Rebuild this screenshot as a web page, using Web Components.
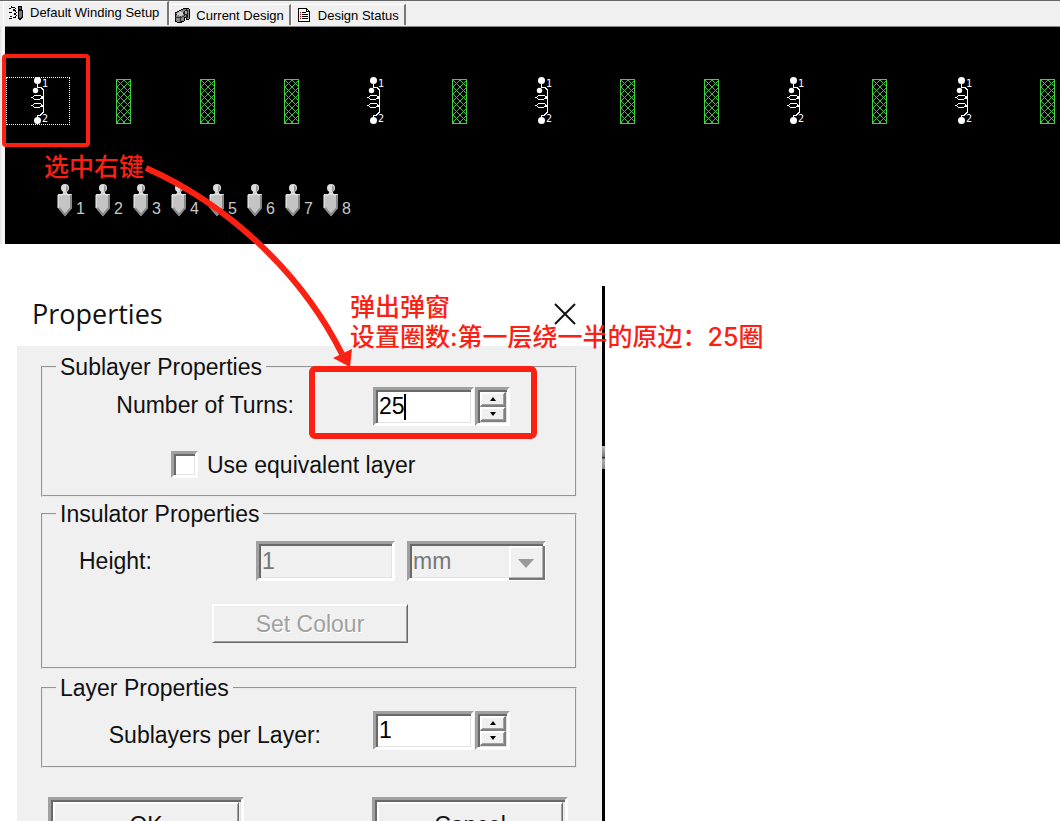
<!DOCTYPE html>
<html lang="en">
<head>
<meta charset="utf-8">
<title>Winding Setup</title>
<style>
    html, body {
        margin: 0;
        background: #fff;
        font-family: "Liberation Sans", Arial, "Noto Sans CJK SC", sans-serif;
        color: #111;
    }

    body {
        height: 100vh;
        overflow: hidden;
    }
</style>
</head>
<body>
<winding-app></winding-app>

<script>
// shared look of the sunken and raised controls
const bevels = `
    * { box-sizing: border-box; }

    .sunken {
        border: 3px solid;
        border-color: #a0a0a0 #fff #fff #a0a0a0;
        box-shadow: inset 2px 2px #696969, inset -1px -1px #e3e3e3;
        border-radius: 0;
        outline: none;
    }

    .raised {
        border: 1px solid;
        border-color: #fff #696969 #696969 #fff;
        box-shadow: inset 1px 1px #fff, inset -1px -1px #a0a0a0;
        border-radius: 0;
        background: #f0f0f0;
    }
`;

const tabIcons = {
    winding: `
        <path d="M1 3h2M3 1v2M1 7h3M2 11h2M1 13h3" stroke="#000" fill="none"/>
        <path d="M4 2c4 0 4 3 1 3 4 0 4 4 1 4 3 0 3 4-1 4" stroke="#000" fill="none"/>
        <circle cx="12" cy="3" r="2" fill="#555" stroke="#000"/>
        <path d="M10 5.5h4v7l-2 2-2-2z" fill="#777" stroke="#000"/>
    `,
    design: `
        <path d="M1 6l4-2 6-3 4 1v10l-3 1v-3l-2 1v3l-5 2-4-2z" fill="#888" stroke="#000"/>
        <path d="M1 7l5 1 4-2M6 8v7M1 10l5 1 4-2" stroke="#333" fill="none"/>
        <path d="M5 4l4 1v3l-3 1-4-2z" fill="#ccc"/>
        <path d="M9 5l3-3 2 1v8l-2 1V8l-2 1z" fill="#222"/>
        <path d="M11 4h2v3h-2z" fill="#aaa"/>
    `,
    status: `
        <path d="M2.5 1.5h8l3 3v10h-11z" fill="#fff" stroke="#000"/>
        <path d="M10.5 1.5v3h3" fill="none" stroke="#000"/>
        <path d="M6 5.5h4M6 7.5h6M6 9.5h6M6 11.5h6" stroke="#000"/>
        <path d="M4 5.5h1M4 7.5h1M4 9.5h1M4 11.5h1" stroke="#a00"/>
    `
};

class SetupTab extends HTMLElement {
    connectedCallback() {
        this.attachShadow({ mode: 'open' });
        this.shadowRoot.innerHTML = `
        <style>
            :host {
                display: block;
                height: 21px;
                margin-bottom: 1px;
            }

            :host([selected]) {
                height: 24px;
            }

            button {
                display: flex;
                align-items: center;
                gap: 6px;
                height: 100%;
                padding: 0 5px 0 4px;
                border: 0;
                border-top: 1px solid #fff;
                border-left: 1px solid #fff;
                border-right: 2px solid #777;
                background: #f0f0f0;
                font: 13px "Liberation Sans", Arial, sans-serif;
                color: #000;
                white-space: nowrap;
            }

            :host([selected]) button {
                padding: 0 8px 2px 4px;
            }

            svg {
                display: block;
                flex: none;
            }
        </style>
        <button type="button" role="tab">
            <svg width="16" height="16" viewBox="0 0 16 16" shape-rendering="crispEdges">${tabIcons[this.getAttribute('icon')]}</svg>
            <slot></slot>
        </button>
        `;
    }
}

// one slot of the winding row: a coil or an insulator
class WindingCell extends HTMLElement {
    connectedCallback() {
        const coil = `
            <svg width="64" height="48" viewBox="0 0 64 48">
                <g fill="#fff">
                    <circle cx="31.5" cy="3.5" r="3.5"/>
                    <circle cx="29.5" cy="13.5" r="2.7"/>
                    <circle cx="31.5" cy="43.5" r="3.5"/>
                </g>
                <g fill="none" stroke="#fff" shape-rendering="crispEdges">
                    <path d="M31.5 7v3h3l3 3v6l-2 2M37.5 19v9l-2 1M37.5 27v8l-3 3h-3v3"/>
                    <path d="M37 21.5h-2l-2 1h-4l-3-2 3-2h5l3 2"/>
                    <path d="M37 29.5h-2l-2 1h-4l-3-2 3-2h5l3 2"/>
                </g>
                <g fill="#fff" font-family="DejaVu Sans Mono, monospace" font-size="10">
                    <text x="36" y="10">1</text>
                    <text x="36" y="45">2</text>
                </g>
            </svg>`;
        const insulator = `
            <svg width="64" height="48" viewBox="0 0 64 48" shape-rendering="crispEdges">
                <defs>
                    <pattern id="mesh" x="27" y="3" width="7" height="7" patternUnits="userSpaceOnUse">
                        <path d="M0 0l7 7M7 0l-7 7" stroke="#3cc43c" fill="none"/>
                    </pattern>
                </defs>
                <rect x="26.5" y="2.5" width="14" height="44" fill="url(#mesh)" stroke="#3cd43c"/>
            </svg>`;

        this.attachShadow({ mode: 'open' });
        this.shadowRoot.innerHTML = `
        <style>
            :host {
                display: block;
                flex: none;
                width: 64px;
                height: 48px;
            }

            :host([selected]) {
                outline: 1px dotted #fff;
                outline-offset: -1px;
            }

            svg { display: block; }
        </style>
        ${this.getAttribute('kind') === 'coil' ? coil : insulator}
        `;
    }
}

class WindingPin extends HTMLElement {
    connectedCallback() {
        this.attachShadow({ mode: 'open' });
        this.shadowRoot.innerHTML = `
        <style>
            :host {
                display: flex;
                flex: none;
                align-items: flex-end;
                gap: 3px;
                width: 38px;
                font-size: 16px;
                line-height: 17px;
                color: #c8c8c8;
            }
        </style>
        <svg width="16" height="34" viewBox="0 0 16 34">
            <path d="M6 6h4v6H6z" fill="#ccc"/>
            <circle cx="8" cy="5" r="4" fill="#ddd"/>
            <path d="M9 2a4 4 0 0 1 0 7z" fill="#999"/>
            <path d="M1 11h4l1-1h4l1 1h4v14l-7 8-7-8z" fill="#c4c4c4"/>
            <path d="M1 25V12h4l1-1h4l1 1h3" fill="none" stroke="#f4f4f4" stroke-width="1"/>
            <path d="M14 12v13l-6 7-6-7" fill="none" stroke="#888" stroke-width="2"/>
        </svg>
        <slot></slot>
        `;
    }
}

class WindingBoard extends HTMLElement {
    connectedCallback() {
        const kinds = 'CIIICICIICICI'.split('');

        this.attachShadow({ mode: 'open' });
        this.shadowRoot.innerHTML = `
        <style>
            :host {
                display: block;
                border-top: 1px solid #666;
                background: #f0f0f0;
            }

            .tabs {
                display: flex;
                align-items: flex-end;
                height: 25px;
                padding-left: 3px;
            }

            .panel {
                margin-left: 5px;
                padding: 50px 0 27px 1px;
                border-top: 1px solid #888;
                background: #000;
                overflow: hidden;
            }

            .strip {
                background: linear-gradient(90deg, #e4e4e4 1px, #fff 3px, #f0f0f0 4px);
            }

            .cells {
                display: flex;
                gap: 20px;
            }

            .pins {
                display: flex;
                padding: 58px 0 0 51px;
            }
        </style>
        <div class="tabs" role="tablist">
            <setup-tab icon="winding" selected>Default Winding Setup</setup-tab>
            <setup-tab icon="design">Current Design</setup-tab>
            <setup-tab icon="status">Design Status</setup-tab>
        </div>
        <div class="strip">
            <div class="panel">
                <div class="cells">
                    ${kinds.map((kind, i) => `<winding-cell kind="${kind === 'C' ? 'coil' : 'insulator'}" ${i === 0 ? 'selected' : ''}></winding-cell>`).join('')}
                </div>
                <div class="pins">
                    ${[1, 2, 3, 4, 5, 6, 7, 8].map((n) => `<winding-pin>${n}</winding-pin>`).join('')}
                </div>
            </div>
        </div>
        `;
    }
}

class PropertyGroup extends HTMLElement {
    connectedCallback() {
        this.attachShadow({ mode: 'open' });
        this.shadowRoot.innerHTML = `
        <style>
            :host { display: block; }

            fieldset {
                margin: 0;
                padding: 0;
                border: 2px groove #e8e8e8;
            }

            legend {
                margin-left: 13px;
                padding: 0 4px;
                line-height: 26px;
            }
        </style>
        <fieldset>
            <legend>${this.getAttribute('heading')}</legend>
            <slot></slot>
        </fieldset>
        `;
    }
}

// label, number box and its up/down buttons
class SpinField extends HTMLElement {
    connectedCallback() {
        this.attachShadow({ mode: 'open' });
        this.shadowRoot.innerHTML = `
        <style>
            ${bevels}

            :host {
                display: grid;
                grid-template-columns: 329px 101px 35px;
                column-gap: 1px;
                align-items: center;
            }

            label {
                justify-self: end;
                padding: var(--label-padding, 0);
            }

            .box {
                position: relative;
            }

            input {
                display: block;
                width: 100%;
                height: 39px;
                padding: 0 3px;
                background: #fff;
                font: inherit;
                color: #000;
            }

            .caret {
                position: absolute;
                left: 31px;
                top: 7px;
                width: 2px;
                height: 26px;
                background: #000;
            }

            .spin {
                display: grid;
                grid-template-rows: 1fr 1fr;
                height: 39px;
                padding: 2px 1px 1px 2px;
            }

            .spin button {
                display: grid;
                place-items: center;
                padding: 0;
                min-height: 0;
                border-width: 1px 2px 2px 1px;
                border-color: #fff #808080 #808080 #fff;
            }

            .spin svg { display: block; }
        </style>
        <label for="value">${this.getAttribute('label')}</label>
        <div class="box">
            <input id="value" class="sunken" type="text" inputmode="numeric" value="${this.getAttribute('value')}">
            ${this.hasAttribute('active') ? '<span class="caret"></span>' : ''}
        </div>
        <div class="spin sunken">
            <button type="button" class="raised" aria-label="Increase"><svg width="6" height="4"><path d="M3 0l3 4H0z"/></svg></button>
            <button type="button" class="raised" aria-label="Decrease"><svg width="6" height="4"><path d="M3 4l3-4H0z"/></svg></button>
        </div>
        `;

        const input = this.shadowRoot.querySelector('input');
        const [up, down] = this.shadowRoot.querySelectorAll('button');
        up.addEventListener('click', () => { input.value = Number(input.value) + 1; });
        down.addEventListener('click', () => { input.value = Math.max(0, Number(input.value) - 1); });
    }
}

class CheckField extends HTMLElement {
    connectedCallback() {
        this.attachShadow({ mode: 'open' });
        this.shadowRoot.innerHTML = `
        <style>
            ${bevels}

            :host { display: block; }

            label {
                display: flex;
                align-items: center;
                gap: 9px;
            }

            input {
                appearance: none;
                width: 27px;
                height: 27px;
                margin: 0;
                background: #fff;
                border-width: 2px;
            }
        </style>
        <label><input type="checkbox" class="sunken"><slot></slot></label>
        `;
    }
}

class HeightField extends HTMLElement {
    connectedCallback() {
        this.attachShadow({ mode: 'open' });
        this.shadowRoot.innerHTML = `
        <style>
            ${bevels}

            :host {
                display: grid;
                grid-template-columns: 177px 139px 139px;
                column-gap: 12px;
                align-items: center;
                padding-left: 24px;
            }

            label { padding-left: 12px; }

            input, select {
                display: block;
                width: 100%;
                height: 40px;
                padding: 0 3px;
                background: #f0f0f0;
                font: inherit;
                color: #777;
                opacity: 1;
                appearance: none;
            }

            .unit { position: relative; }

            .unit svg {
                position: absolute;
                right: 1px;
                top: 5px;
                pointer-events: none;
            }
        </style>
        <label for="height">Height:</label>
        <input id="height" class="sunken" type="text" value="1" disabled>
        <div class="unit">
            <select class="sunken" aria-label="Height unit" disabled><option>mm</option></select>
            <svg width="36" height="34">
                <path d="M0 0h36v34H0z" fill="#f0f0f0"/>
                <path d="M1 32V1h33" fill="none" stroke="#fff" stroke-width="2"/>
                <path d="M0 33h35V0" fill="none" stroke="#777" stroke-width="3"/>
                <path d="M9 13h16l-8 9z" fill="#999"/>
            </svg>
        </div>
        `;
    }
}

class DialogButton extends HTMLElement {
    connectedCallback() {
        this.attachShadow({ mode: 'open' });
        this.shadowRoot.innerHTML = `
        <style>
            ${bevels}

            :host { display: block; width: 196px; }

            button {
                width: 100%;
                height: 39px;
                padding: 0;
                font: inherit;
                color: #111;
                border-width: 2px;
            }

            button:disabled {
                color: #a0a0a0;
                text-shadow: 1px 1px #fff;
            }

            .frame { padding: 2px; }

            .frame button { height: 46px; }
        </style>
        <div class="${this.hasAttribute('large') ? 'frame sunken' : ''}">
            <button type="button" class="raised" ${this.hasAttribute('disabled') ? 'disabled' : ''}><slot></slot></button>
        </div>
        `;
    }
}

class PropertiesDialog extends HTMLElement {
    connectedCallback() {
        this.attachShadow({ mode: 'open' });
        this.shadowRoot.innerHTML = `
        <style>
            :host {
                display: block;
                position: relative;
                width: 588px;
                box-sizing: border-box;
                border-right: 3px solid #000;
                font-size: 23px;
                line-height: 26px;
            }

            header {
                display: flex;
                align-items: center;
                justify-content: space-between;
                height: 60px;
                box-sizing: border-box;
                padding: 0 25px 5px 15px;
            }

            h2 {
                margin: 0;
                font: 27px "Open Sans", "Noto Sans", sans-serif;
            }

            .close {
                width: 24px;
                height: 24px;
                padding: 0;
                border: 0;
                background: none;
            }

            .close svg { display: block; }

            .body {
                display: grid;
                gap: 4px;
                padding: 8px 25px 24px 24px;
                background: #f0f0f0;
            }

            spin-field { padding: 7px 0; }

            .turns { --label-padding: 0 78px 4px 0; }

            check-field { padding: 18px 0 17px 128px; }

            height-field { padding-top: 14px; padding-bottom: 23px; }

            .colour { margin: 0 0 24px 169px; }

            .last { margin-top: 2px; }

            .layer {
                --label-padding: 8px 51px 0 0;
                padding: 10px 0 16px;
            }

            .actions {
                display: flex;
                justify-content: space-between;
                padding: 25px 9px 0 7px;
            }

            /* scrap of the window behind the dialog edge */
            .scrap {
                position: absolute;
                right: -3px;
                top: 160px;
                width: 3px;
                height: 23px;
                background: linear-gradient(#bbb, #777 45%, #333 50%, #aaa 60%, #888);
            }
        </style>
        <header>
            <h2>Properties</h2>
            <button type="button" class="close" aria-label="Close">
                <svg width="24" height="24"><path d="M2 2l20 20M22 2L2 22" stroke="#111" stroke-width="2" fill="none"/></svg>
            </button>
        </header>
        <div class="body">
            <property-group heading="Sublayer Properties">
                <spin-field class="turns" label="Number of Turns:" value="25" active></spin-field>
                <check-field>Use equivalent layer</check-field>
            </property-group>
            <property-group heading="Insulator Properties">
                <height-field></height-field>
                <dialog-button class="colour" disabled>Set Colour</dialog-button>
            </property-group>
            <property-group class="last" heading="Layer Properties">
                <spin-field class="layer" label="Sublayers per Layer:" value="1"></spin-field>
            </property-group>
            <div class="actions">
                <dialog-button large>OK</dialog-button>
                <dialog-button large>Cancel</dialog-button>
            </div>
        </div>
        <span class="scrap"></span>
        `;
    }
}

// red marks and notes that lie over both windows
class MarkupLayer extends HTMLElement {
    connectedCallback() {
        this.attachShadow({ mode: 'open' });
        this.shadowRoot.innerHTML = `
        <style>
            :host {
                position: absolute;
                left: 0;
                top: 0;
                pointer-events: none;
                color: #fc2012;
                font: 500 25px/30px Inter, "Noto Sans CJK SC", sans-serif;
            }

            svg { display: block; }

            p {
                position: absolute;
                margin: 0;
                white-space: nowrap;
            }

            .select { left: 44px; top: 152px; }
            .popup { left: 350px; top: 292px; }
        </style>
        <svg width="560" height="460" fill="none" stroke="#fc2012">
            <rect x="4" y="56" width="84" height="89" rx="2" stroke-width="4"/>
            <rect x="312" y="369" width="222" height="67" rx="3" stroke-width="6"/>
            <path d="M146 168C225 203 300 270 342 354" stroke-width="6"/>
            <path d="M333 358l19-9-2 18z" fill="#fc2012" stroke="none"/>
        </svg>
        <p class="select">选中右键</p>
        <p class="popup">弹出弹窗<br>设置圈数:第一层绕一半的原边：25圈</p>
        `;
    }
}

class WindingApp extends HTMLElement {
    connectedCallback() {
        this.attachShadow({ mode: 'open' });
        this.shadowRoot.innerHTML = `
        <style>
            :host {
                display: block;
                position: relative;
            }

            properties-dialog { margin: 42px 0 0 17px; }
        </style>
        <winding-board></winding-board>
        <properties-dialog></properties-dialog>
        <markup-layer></markup-layer>
        `;
    }
}

customElements.define('setup-tab', SetupTab);
customElements.define('winding-cell', WindingCell);
customElements.define('winding-pin', WindingPin);
customElements.define('winding-board', WindingBoard);
customElements.define('property-group', PropertyGroup);
customElements.define('spin-field', SpinField);
customElements.define('check-field', CheckField);
customElements.define('height-field', HeightField);
customElements.define('dialog-button', DialogButton);
customElements.define('properties-dialog', PropertiesDialog);
customElements.define('markup-layer', MarkupLayer);
customElements.define('winding-app', WindingApp);
</script>
</body>
</html>
